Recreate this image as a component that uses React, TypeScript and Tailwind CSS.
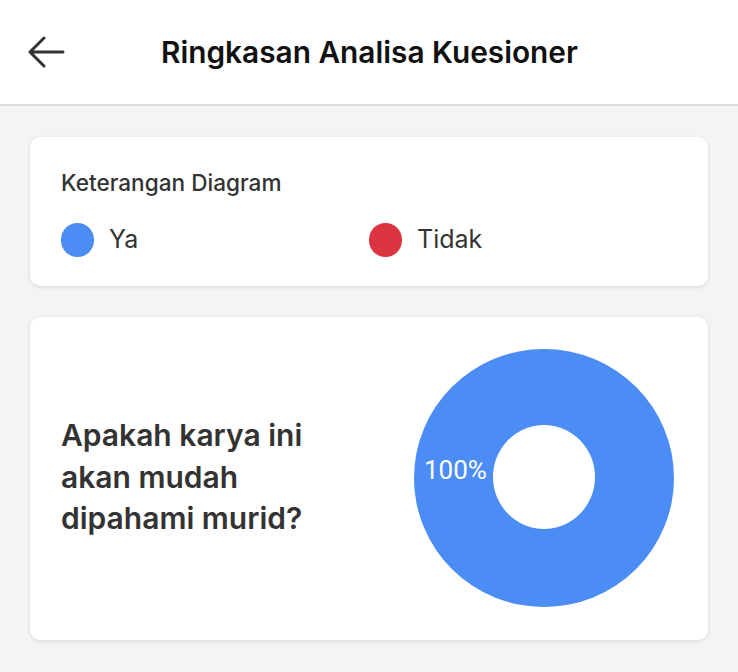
import React from 'react';

const legend = [
  { label: 'Ya', color: 'bg-[#4b8df5]' },
  { label: 'Tidak', color: 'bg-[#dc3340]' },
];

const Donut = () => (
  <svg width="260" height="258" viewBox="0 0 260 258">
    <ellipse cx="130" cy="129" rx="130" ry="129" fill="#4b8df5" />
    <ellipse cx="130" cy="128" rx="51" ry="52" fill="#ffffff" />
    <text
      x="10"
      y="130"
      fill="#ffffff"
      fontSize="26"
      fontFamily="Roboto, sans-serif"
    >
      100%
    </text>
  </svg>
);

const App = () => {
  return (
    <div className="min-h-[672px] bg-[#f4f4f4] font-['Inter',sans-serif]">
      <header className="flex h-[106px] items-center border-b-2 border-[#dcdcdc] bg-white">
        <button className="ml-[26px] flex h-10 w-10 items-center justify-center">
          <svg width="38" height="32" viewBox="0 0 38 32" fill="none">
            <path
              d="M3 16H36M17 2L3 16L17 30"
              stroke="#333"
              strokeWidth="3"
              strokeLinecap="round"
              strokeLinejoin="round"
            />
          </svg>
        </button>
        <h1 className="ml-[95px] text-[29.8px] font-semibold text-[#111]">
          Ringkasan Analisa Kuesioner
        </h1>
      </header>

      <main className="flex flex-col gap-[31px] px-[30px] pt-[31px]">
        <section className="rounded-[10px] bg-white px-[31px] pt-[32px] pb-[27px] shadow-[0_1px_4px_rgba(0,0,0,0.12)]">
          <h2 className="text-[22.6px] leading-[28px] font-medium text-[#333]">
            Keterangan Diagram
          </h2>
          <div className="mt-[24px] grid grid-cols-2">
            {legend.map((item) => (
              <div key={item.label} className="flex items-center gap-[15px]">
                <span className={`h-[34px] w-[33px] rounded-full ${item.color}`} />
                <span className="text-[25px] text-[#333]">{item.label}</span>
              </div>
            ))}
          </div>
        </section>

        <section className="flex items-center justify-between rounded-[10px] bg-white pt-[32px] pr-[34px] pb-[33px] pl-[31px] shadow-[0_1px_4px_rgba(0,0,0,0.12)]">
          <p className="w-[270px] text-[30px] leading-[41.5px] font-semibold text-[#333]">
            Apakah karya ini akan mudah dipahami murid?
          </p>
          <Donut />
        </section>
      </main>
    </div>
  );
};

export default App;
